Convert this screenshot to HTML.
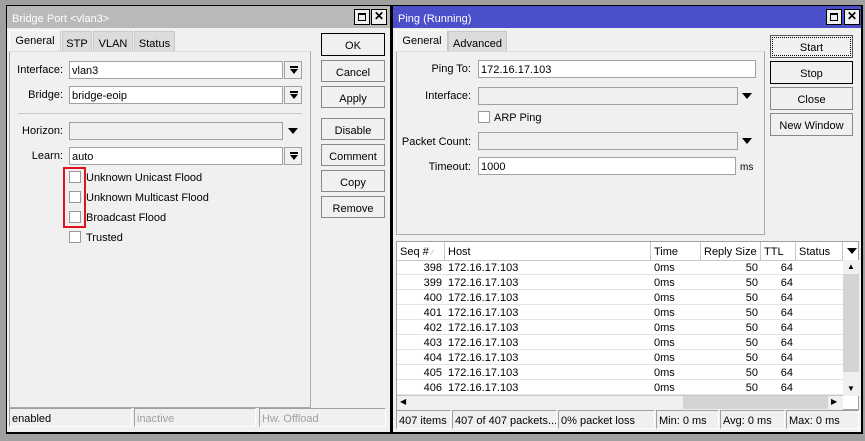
<!DOCTYPE html>
<html><head><meta charset="utf-8"><style>
*{box-sizing:border-box;margin:0;padding:0}
body{width:865px;height:441px;background:#a0a0a0;font-family:"Liberation Sans",sans-serif;font-size:11px;color:#000;position:relative;overflow:hidden;white-space:nowrap}
.a{position:absolute}
.t{margin-top:1px}
.win{position:absolute;background:#f0f0f0;border:1px solid #000;border-right:2px solid #000;border-bottom:2px solid #000}
.tb{position:absolute;left:0;right:0;top:0;height:22px;color:#fff;padding:7px 0 0 5px;font-size:11px}
.wb{position:absolute;top:3px;width:16px;height:16px;background:#f0f0f0;border:1px solid #000}
.tab{position:absolute;height:21px;background:#dcdcdc;border:1px solid #c8c8c8;text-align:center;padding-top:6px}
.tab.on{background:#f0f0f0;border-color:#fff #c8c8c8 #f0f0f0 #fff;height:22px;padding-top:4px}
.panel{position:absolute;border:1px solid #aaa;border-top-color:#dcdcdc}
.lbl{position:absolute;text-align:right;margin-top:1px}
.inp{position:absolute;background:#fff;border:1px solid #a0a0a0;padding:3px 0 0 2px;height:18px}
.inp.g{background:#f0f0f0}
.dd{position:absolute;width:18px;height:18px;border:1px solid #a0a0a0;background:#f0f0f0}
.dd:after{content:"";position:absolute;left:5px;top:7px;border-left:4px solid transparent;border-right:4px solid transparent;border-top:5px solid #000}
.dd:before{content:"";position:absolute;left:5px;top:4px;width:8px;height:2px;background:#000}
.arr{position:absolute;width:0;height:0;border-left:5px solid transparent;border-right:5px solid transparent;border-top:6px solid #000}
.btn{position:absolute;background:#f0f0f0;border:1px solid #888;text-align:center;padding-top:6px}
.cb{position:absolute;width:12px;height:12px;background:#fff;border:1px solid #999}
.sc{position:absolute;height:19px;border:1px solid #a0a0a0;border-right-color:#fff;border-bottom-color:#fff;padding:4px 0 0 2px;overflow:hidden}
.row{position:absolute;left:0;height:15px;border-bottom:1px solid #e4e4e4;width:446px}
.row span{position:absolute;top:2px}
.hd{position:absolute;top:0;height:18px;border-right:1px solid #c8c8c8;padding:4px 0 0 3px;background:#fff}
</style></head><body>

<div class="win" style="left:6px;top:5px;width:386px;height:429px">
 <div class="tb" style="background:#b9b9b9">Bridge Port &lt;vlan3&gt;</div>
 <div class="wb" style="left:347px"><div class="a" style="left:3px;top:3px;width:8px;height:8px;border:1px solid #000;border-top-width:2px"></div></div>
 <div class="wb" style="left:364px;font-weight:bold;text-align:center;line-height:13px;font-size:12px">✕</div>
</div>
<div class="tab on" style="left:9px;top:30px;width:52px">General</div>
<div class="tab" style="left:62px;top:31px;width:30px">STP</div>
<div class="tab" style="left:93px;top:31px;width:40px">VLAN</div>
<div class="tab" style="left:134px;top:31px;width:41px">Status</div>
<div class="panel" style="left:9px;top:51px;width:302px;height:357px"></div>
<div class="lbl" style="left:10px;top:63px;width:53px">Interface:</div>
<div class="inp" style="left:69px;top:61px;width:214px">vlan3</div>
<div class="dd" style="left:284px;top:61px"></div>
<div class="lbl" style="left:10px;top:88px;width:53px">Bridge:</div>
<div class="inp" style="left:69px;top:86px;width:214px">bridge-eoip</div>
<div class="dd" style="left:284px;top:86px"></div>
<div class="a" style="left:18px;top:113px;width:284px;height:1px;background:#c8c8c8"></div>
<div class="lbl" style="left:10px;top:124px;width:53px">Horizon:</div>
<div class="inp g" style="left:69px;top:122px;width:214px"></div>
<div class="arr" style="left:288px;top:128px"></div>
<div class="lbl" style="left:10px;top:149px;width:53px">Learn:</div>
<div class="inp" style="left:69px;top:147px;width:214px">auto</div>
<div class="dd" style="left:284px;top:147px"></div>
<div class="cb" style="left:69px;top:171px"></div><div class="a t" style="left:86px;top:171px">Unknown Unicast Flood</div>
<div class="cb" style="left:69px;top:191px"></div><div class="a t" style="left:86px;top:191px">Unknown Multicast Flood</div>
<div class="cb" style="left:69px;top:211px"></div><div class="a t" style="left:86px;top:211px">Broadcast Flood</div>
<div class="cb" style="left:69px;top:231px"></div><div class="a t" style="left:86px;top:231px">Trusted</div>
<div class="a" style="left:63px;top:167px;width:23px;height:61px;border:2px solid #e0141e"></div>
<div class="btn" style="left:321px;top:33px;width:64px;height:23px;border:1px solid #000">OK</div>
<div class="btn" style="left:321px;top:60px;width:64px;height:22px">Cancel</div>
<div class="btn" style="left:321px;top:86px;width:64px;height:22px">Apply</div>
<div class="btn" style="left:321px;top:118px;width:64px;height:22px">Disable</div>
<div class="btn" style="left:321px;top:144px;width:64px;height:22px">Comment</div>
<div class="btn" style="left:321px;top:170px;width:64px;height:22px">Copy</div>
<div class="btn" style="left:321px;top:196px;width:64px;height:22px">Remove</div>
<div class="sc" style="left:9px;top:408px;width:123px">enabled</div>
<div class="sc" style="left:134px;top:408px;width:122px;color:#a0a0a0">inactive</div>
<div class="sc" style="left:259px;top:408px;width:127px;color:#a0a0a0">Hw. Offload</div>

<div class="win" style="left:392px;top:5px;width:471px;height:429px">
 <div class="tb" style="background:#4b4fc9">Ping (Running)</div>
 <div class="wb" style="left:433px"><div class="a" style="left:3px;top:3px;width:8px;height:8px;border:1px solid #000;border-top-width:2px"></div></div>
 <div class="wb" style="left:451px;font-weight:bold;text-align:center;line-height:13px;font-size:12px">✕</div>
</div>
<div class="tab on" style="left:396px;top:30px;width:52px">General</div>
<div class="tab" style="left:448px;top:31px;width:59px">Advanced</div>
<div class="panel" style="left:396px;top:51px;width:369px;height:184px"></div>
<div class="lbl" style="left:396px;top:62px;width:75px">Ping To:</div>
<div class="inp" style="left:478px;top:60px;width:278px">172.16.17.103</div>
<div class="lbl" style="left:396px;top:89px;width:75px">Interface:</div>
<div class="inp g" style="left:478px;top:87px;width:260px"></div>
<div class="arr" style="left:742px;top:93px"></div>
<div class="cb" style="left:478px;top:111px"></div><div class="a t" style="left:494px;top:111px">ARP Ping</div>
<div class="lbl" style="left:396px;top:135px;width:75px">Packet Count:</div>
<div class="inp g" style="left:478px;top:132px;width:260px"></div>
<div class="arr" style="left:742px;top:138px"></div>
<div class="lbl" style="left:396px;top:160px;width:75px">Timeout:</div>
<div class="inp" style="left:478px;top:157px;width:258px">1000</div>
<div class="a" style="left:740px;top:162px;font-size:10px">ms</div>
<div class="btn" style="left:770px;top:35px;width:83px;height:23px;border:1px solid #555;outline:1px dotted #000;outline-offset:-3px">Start</div>
<div class="btn" style="left:770px;top:61px;width:83px;height:23px;border:1px solid #000">Stop</div>
<div class="btn" style="left:770px;top:87px;width:83px;height:23px">Close</div>
<div class="btn" style="left:770px;top:113px;width:83px;height:23px">New Window</div>

<div class="a" style="left:396px;top:241px;width:463px;height:169px;background:#fff;border:1px solid #a0a0a0">
 <div class="hd" style="left:0;width:48px">Seq # <span style="color:#aaa;font-size:8px">∕</span></div>
 <div class="hd" style="left:48px;width:206px">Host</div>
 <div class="hd" style="left:254px;width:50px">Time</div>
 <div class="hd" style="left:304px;width:60px">Reply Size</div>
 <div class="hd" style="left:364px;width:35px">TTL</div>
 <div class="hd" style="left:399px;width:47px">Status</div>
 <div class="a" style="left:0;top:18px;width:446px;height:1px;background:#c8c8c8"></div>
 <div class="arr" style="left:450px;top:6px"></div>
 <div class="a" style="left:446px;top:18px;width:16px;height:136px;background:#d4d4d4"></div>
 <div class="a" style="left:446px;top:18px;width:16px;height:14px;background:#f0f0f0;text-align:center;font-size:8px;line-height:14px">▲</div>
 <div class="a" style="left:446px;top:130px;width:16px;height:10px;background:#f0f0f0"></div>
 <div class="a" style="left:446px;top:140px;width:16px;height:14px;background:#f0f0f0;text-align:center;font-size:8px;line-height:14px">▼</div>
 <div class="a" style="left:0;top:153px;width:446px;height:15px;background:#f0f0f0;border-top:1px solid #c8c8c8"></div>
 <div class="a" style="left:16px;top:154px;width:270px;height:13px;background:#f0f0f0"></div>
 <div class="a" style="left:286px;top:154px;width:145px;height:13px;background:#d4d4d4"></div>
 <div class="a" style="left:3px;top:155px;font-size:8px">◀</div>
 <div class="a" style="left:434px;top:155px;font-size:8px">▶</div>
</div>
<div class="a" style="left:397px;top:260px">
 <div class="row" style="top:0"><span style="left:0;width:45px;text-align:right">398</span><span style="left:51px">172.16.17.103</span><span style="left:257px">0ms</span><span style="left:304px;width:57px;text-align:right">50</span><span style="left:364px;width:32px;text-align:right">64</span></div>
 <div class="row" style="top:15px"><span style="left:0;width:45px;text-align:right">399</span><span style="left:51px">172.16.17.103</span><span style="left:257px">0ms</span><span style="left:304px;width:57px;text-align:right">50</span><span style="left:364px;width:32px;text-align:right">64</span></div>
 <div class="row" style="top:30px"><span style="left:0;width:45px;text-align:right">400</span><span style="left:51px">172.16.17.103</span><span style="left:257px">0ms</span><span style="left:304px;width:57px;text-align:right">50</span><span style="left:364px;width:32px;text-align:right">64</span></div>
 <div class="row" style="top:45px"><span style="left:0;width:45px;text-align:right">401</span><span style="left:51px">172.16.17.103</span><span style="left:257px">0ms</span><span style="left:304px;width:57px;text-align:right">50</span><span style="left:364px;width:32px;text-align:right">64</span></div>
 <div class="row" style="top:60px"><span style="left:0;width:45px;text-align:right">402</span><span style="left:51px">172.16.17.103</span><span style="left:257px">0ms</span><span style="left:304px;width:57px;text-align:right">50</span><span style="left:364px;width:32px;text-align:right">64</span></div>
 <div class="row" style="top:75px"><span style="left:0;width:45px;text-align:right">403</span><span style="left:51px">172.16.17.103</span><span style="left:257px">0ms</span><span style="left:304px;width:57px;text-align:right">50</span><span style="left:364px;width:32px;text-align:right">64</span></div>
 <div class="row" style="top:90px"><span style="left:0;width:45px;text-align:right">404</span><span style="left:51px">172.16.17.103</span><span style="left:257px">0ms</span><span style="left:304px;width:57px;text-align:right">50</span><span style="left:364px;width:32px;text-align:right">64</span></div>
 <div class="row" style="top:105px"><span style="left:0;width:45px;text-align:right">405</span><span style="left:51px">172.16.17.103</span><span style="left:257px">0ms</span><span style="left:304px;width:57px;text-align:right">50</span><span style="left:364px;width:32px;text-align:right">64</span></div>
 <div class="row" style="top:120px"><span style="left:0;width:45px;text-align:right">406</span><span style="left:51px">172.16.17.103</span><span style="left:257px">0ms</span><span style="left:304px;width:57px;text-align:right">50</span><span style="left:364px;width:32px;text-align:right">64</span></div>
</div>
<div class="sc" style="left:396px;top:410px;width:55px">407 items</div>
<div class="sc" style="left:452px;top:410px;width:105px">407 of 407 packets...</div>
<div class="sc" style="left:558px;top:410px;width:97px">0% packet loss</div>
<div class="sc" style="left:656px;top:410px;width:63px">Min: 0 ms</div>
<div class="sc" style="left:720px;top:410px;width:65px">Avg: 0 ms</div>
<div class="sc" style="left:786px;top:410px;width:73px">Max: 0 ms</div>
</body></html>
